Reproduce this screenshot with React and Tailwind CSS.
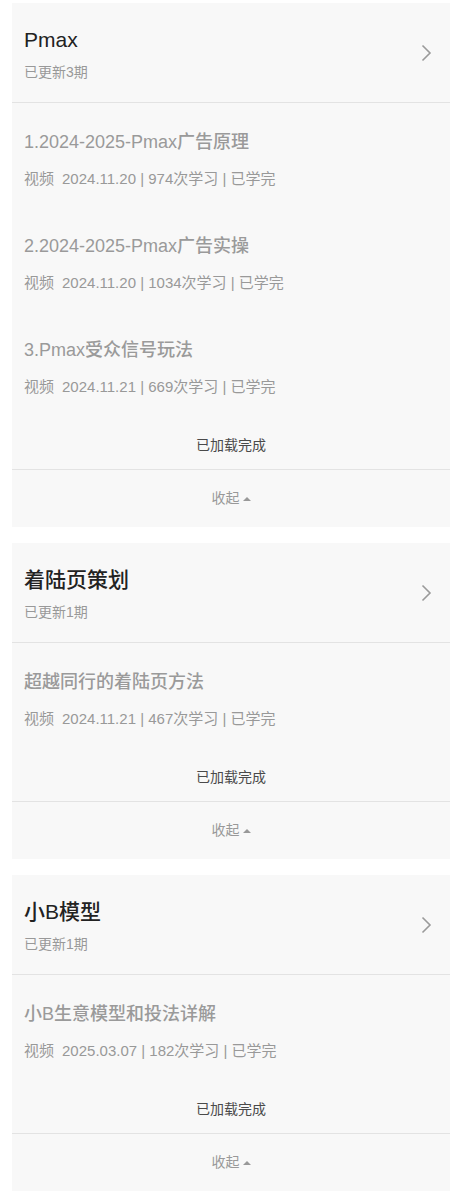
const sections = [
  {
    title: "Pmax",
    updated: "已更新3期",
    lessons: [
      { name: "1.2024-2025-Pmax广告原理", date: "2024.11.20", views: 974 },
      { name: "2.2024-2025-Pmax广告实操", date: "2024.11.20", views: 1034 },
      { name: "3.Pmax受众信号玩法", date: "2024.11.21", views: 669 },
    ],
  },
  {
    title: "着陆页策划",
    updated: "已更新1期",
    lessons: [{ name: "超越同行的着陆页方法", date: "2024.11.21", views: 467 }],
  },
  {
    title: "小B模型",
    updated: "已更新1期",
    lessons: [{ name: "小B生意模型和投法详解", date: "2025.03.07", views: 182 }],
  },
];

const ChevronRight = () => (
  <svg width="11" height="18" viewBox="0 0 11 18" fill="none">
    <path d="M1.5 1.5 L9 9 L1.5 16.5" stroke="#9a9a9a" strokeWidth="1.6" />
  </svg>
);

const Section = ({ section }) => (
  <div className="w-[438px] ml-[12px] bg-[#f8f8f8]">
    {/* Header */}
    <div className="h-[100px] pl-[12px] pr-[18px] flex items-center justify-between border-b border-[#e3e3e3]">
      <div className="pt-[1px]">
        <h2 className="text-[21px] leading-[28px] font-medium text-[#222]">{section.title}</h2>
        <p className="mt-[9px] text-[14px] leading-[18px] text-[#999]">{section.updated}</p>
      </div>
      <ChevronRight />
    </div>

    {/* Lessons */}
    <div className="px-[12px]">
      {section.lessons.map((l) => (
        <div key={l.name} className="pt-[28px] pb-[18px]">
          <p className="text-[18px] leading-[22px] font-medium text-[#9a9a9a]">{l.name}</p>
          <p className="mt-[16px] text-[15px] leading-[20px] text-[#999]">
            <span className="mr-[8px]">视频</span>
            {l.date} | {l.views}次学习 | 已学完
          </p>
        </div>
      ))}
    </div>

    <div className="pt-[21px] pb-[15px] text-center text-[14px] leading-[18px] text-[#4a4a4a] border-b border-[#e3e3e3]">
      已加载完成
    </div>

    <div className="h-[57px] flex items-center justify-center gap-[3px] text-[14px] text-[#999]">
      <span>收起</span>
      <svg width="8" height="6" viewBox="0 0 8 6">
        <path d="M0 5 L4 1 L8 5 Z" fill="#999" />
      </svg>
    </div>
  </div>
);

export default function App() {
  return (
    <div
      className="min-h-[1202px] bg-white pt-[3px] flex flex-col gap-[16px]"
      style={{ fontFamily: '"Liberation Sans", Arial, "Noto Sans CJK SC", sans-serif' }}
    >
      {sections.map((s) => (
        <Section key={s.title} section={s} />
      ))}
    </div>
  );
}
